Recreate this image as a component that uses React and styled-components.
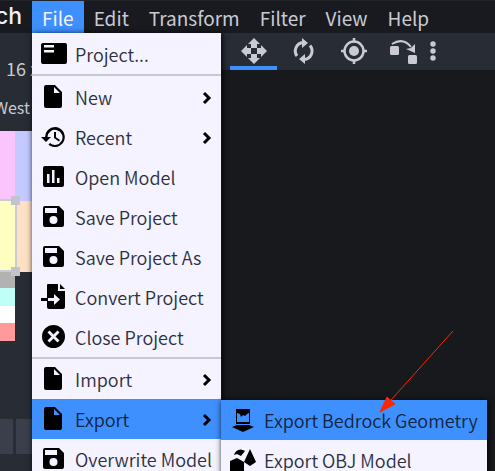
import React from "react";
import styled, { createGlobalStyle } from "styled-components";

const c = {
  dark: "#17191d",
  bar: "#191a1f",
  ui: "#282c34",
  button: "#3a3f4b",
  text: "#cacad4",
  accent: "#3e90ff",
  light: "#f4f3ff",
  ink: "#2d2f3d",
};

const GlobalStyle = createGlobalStyle`
  * { box-sizing: border-box; }
  body {
    margin: 0;
    background: ${c.dark};
    color: ${c.text};
    font: 400 18px/26px "Noto Sans CJK SC", "Noto Sans", sans-serif;
    overflow: hidden;
  }
  button { font: inherit; color: inherit; background: none; border: 0; padding: 0; margin: 0; }
`;

const Shell = styled.div`
  display: flex;
  flex-direction: column;
  height: 100vh;
  overflow: hidden;
`;

const MenuBar = styled.header`
  display: flex;
  flex: none;
  height: 33px;
  background: ${c.bar};
  border-top: 1px solid #22242a;
`;

const Brand = styled.div`
  display: flex;
  justify-content: flex-end;
  flex: none;
  width: 32px;
  padding-right: 10px;
  font: 500 23px/30px Inter, sans-serif;
  color: #f0f0f6;
`;

const MenuSlot = styled.div`
  position: relative;
`;

const MenuButton = styled.button`
  && {
    display: block;
    height: 32px;
    padding: 1px 10px 0;
    font-size: 19px;
    background: ${(p) => (p.$open ? c.accent : "transparent")};
    color: ${(p) => (p.$open ? c.light : c.text)};
  }
`;

const Menu = styled.ul`
  position: absolute;
  z-index: 2;
  top: 100%;
  left: 0;
  width: max-content;
  min-width: 189px;
  margin: 0;
  padding: 1px 0 0;
  list-style: none;
  background: ${c.light};
  color: ${c.ink};
  font-family: "Noto Sans CJK SC DemiLight", "Noto Sans CJK SC", sans-serif;
  font-weight: 350;
  box-shadow: 1px 1px 6px #000;
`;

const SubMenu = styled(Menu)`
  top: 1px;
  left: 100%;
  min-width: 265px;
  padding: 0;
`;

const Entry = styled.li`
  position: relative;
  background: ${(p) => (p.$active ? c.accent : "transparent")};
  color: ${(p) => (p.$active ? "#10233f" : c.ink)};
`;

const EntryButton = styled.button`
  && {
    display: flex;
    align-items: center;
    width: 100%;
    height: 40px;
    padding: 0 9px;
    gap: 8px;
    text-align: left;
    white-space: nowrap;
  }
  svg { flex: none; color: #000; }
`;

const EntryLabel = styled.span`
  flex: 1;
`;

const Divider = styled.li`
  height: 2px;
  background: #c8c8d4;
  &:nth-child(2) { margin-bottom: 1px; }
`;

const Body = styled.div`
  display: flex;
  flex: 1;
  min-height: 0;
`;

const Sidebar = styled.aside`
  flex: none;
  width: 222px;
  background: ${c.ui};
  overflow: hidden;
`;

const SizeLabel = styled.div`
  height: 54px;
  padding: 22px 6px 0;
`;

const FaceTab = styled.div`
  display: flex;
  justify-content: flex-end;
  width: 30px;
  height: 44px;
  padding-top: 7px;
  font-size: 16px;
`;

const UvCanvas = styled.div`
  position: relative;
  display: grid;
  grid-template-columns: 15px 48px;
  grid-template-rows: 70px 71px 16px 18px 17px 18px;
`;

const Face = styled.div`
  background: ${(p) => p.$color};
`;

const Selection = styled.div`
  position: absolute;
  top: 68px;
  left: -60px;
  width: 77px;
  height: 73px;
  border: 2px solid ${c.text};
`;

const Handle = styled.i`
  position: absolute;
  right: -5px;
  top: ${(p) => (p.$bottom ? "auto" : "-5px")};
  bottom: ${(p) => (p.$bottom ? "-6px" : "auto")};
  width: 9px;
  height: 9px;
  background: #c3c3cf;
`;

const Swatches = styled.div`
  display: grid;
  grid-template-columns: 13px 40px;
  gap: 3px;
  margin-top: 78px;
`;

const Slot = styled.div`
  height: 35px;
  background: ${c.button};
`;

const PanelIcon = styled.div`
  padding: 12px 0 0 18px;
`;

const Stage = styled.main`
  flex: 1;
  min-width: 0;
`;

const Toolbar = styled.div`
  display: flex;
  height: 37px;
  padding-left: 8px;
  background: ${c.ui};
`;

const Tool = styled.button`
  && {
    display: flex;
    justify-content: center;
    width: ${(p) => (p.$narrow ? "6px" : "47px")};
    margin-right: ${(p) => (p.$narrow ? "0" : "3px")};
    padding-top: 4px;
    border-bottom: 4px solid ${(p) => (p.$active ? c.accent : "transparent")};
    color: ${c.text};
  }
  svg { flex: none; }
`;

const Pointer = styled.svg`
  position: absolute;
  z-index: 5;
  left: 379px;
  top: 330px;
  pointer-events: none;
`;

const paths = {
  file: "M5 1h9l7 7v14q0 2-2 2H5q-2 0-2-2V3q0-2 2-2zm8 2v6h6z",
  history: "M14 3a10 10 0 0 0-10 10H0l5 5 5-5H6.500a7.500 7.500 0 1 1 2.500 6l-1.500 1.800A10 10 0 1 0 14 3zm-1 5v6l5 3.500 1-1.600-4-2.700V8z",
  chart: "M4 2h17q2 0 2 2v17q0 2-2 2H4q-2 0-2-2V4q0-2 2-2zm2 8v9h2.500v-9zm5-4v13h2.500V6zm5 8v5h2.500v-5z",
  save: "M4 2h14l5 5v14q0 2-2 2H4q-2 0-2-2V4q0-2 2-2zm0 2v5h12V4zm8.500 8a4 4 0 1 0 0 8 4 4 0 0 0 0-8z",
  close: "M12.500 1a11.500 11.500 0 1 0 0 23 11.500 11.500 0 0 0 0-23zM8.500 6.500l4 4 4-4 2 2-4 4 4 4-2 2-4-4-4 4-2-2 4-4-4-4z",
  convert: "M7 0h10v7h7v16q0 2-2 2H8q-2 0-2-2V1q0-1 1-1zM19 0l5 5h-5zM0 14h6v3H0zM7 14h6v-4l6 5.500-6 5.500v-4H7z",
  project: "M2 2h22q2 0 2 2v17q0 2-2 2H2q-2 0-2-2V4q0-2 2-2zm1 2v2.500h10V4zm0 5v2.500h10V9z",
  bedrock: "M6 2h14v15H6zm1 4v9h12V6l-2 1-2 2-2-1-2 2-1-3zM2 20l5-2h12l5 2-11 5z",
  obj: "M0 14l7-3 7 4v11H0zM4 8a7 7 0 0 1 11-4l-4 5-4-2zM20 2l6 13-6 4-6-4z",
};

function Icon({ name }) {
  return (
    <svg width="26" height="26" viewBox="0 0 26 26" aria-hidden="true">
      <path d={paths[name]} fill="currentColor" fillRule="evenodd" />
    </svg>
  );
}

const Chevron = () => (
  <svg width="12" height="16" viewBox="0 0 12 16" aria-hidden="true">
    <path d="M4 4l5 5-5 5" fill="none" stroke="currentColor" strokeWidth="3" />
  </svg>
);

function Item({ icon, label, arrow, active, children }) {
  return (
    <Entry $active={active}>
      <EntryButton type="button">
        <Icon name={icon} />
        <EntryLabel>{label}</EntryLabel>
        {arrow && <Chevron />}
      </EntryButton>
      {children}
    </Entry>
  );
}

const MoveIcon = () => (
  <svg width="28" height="28" viewBox="0 0 28 28" fill="currentColor" aria-hidden="true">
    <path d="M14 1l6 6h-3v5h-6V7H8zM27 14l-6 6v-3h-5v-6h5V8zM14 27l-6-6h3v-5h6v5h3zM1 14l6-6v3h5v6H7v3z" />
    <path d="M11 11h6v6h-6z" fill={c.ui} />
  </svg>
);

const RotateIcon = () => (
  <svg width="28" height="28" viewBox="0 0 28 28" aria-hidden="true">
    <g fill="none" stroke="currentColor" strokeWidth="3">
      <path d="M7 19A8.500 8.500 0 0 1 13 5.500M20 8.500a8.500 8.500 0 0 1-6 14" />
    </g>
    <path d="M12 1v10l6-5zM15 17v10l-6-5z" fill="currentColor" />
  </svg>
);

const PivotIcon = () => (
  <svg width="28" height="28" viewBox="0 0 28 28" fill="none" stroke="currentColor" strokeWidth="2.500" aria-hidden="true">
    <circle cx="14" cy="14" r="9.500" />
    <circle cx="14" cy="14" r="5" fill="currentColor" stroke="none" />
    <path d="M14 1v4M14 23v4M1 14h4M23 14h4" />
  </svg>
);

const VertexIcon = () => (
  <svg width="28" height="28" viewBox="0 0 28 28" fill="currentColor" aria-hidden="true">
    <rect x="0" y="9" width="9" height="9" rx="1.500" />
    <rect x="18" y="18" width="9" height="9" rx="1.500" />
    <path d="M2 7Q13 0 21 10" fill="none" stroke="currentColor" strokeWidth="2" />
    <path d="M25 7l0 9-9-4 5-1z" />
  </svg>
);

const DotsIcon = () => (
  <svg width="6" height="28" viewBox="0 0 6 28" fill="currentColor" aria-hidden="true">
    <circle cx="3" cy="7" r="2.700" />
    <circle cx="3" cy="14" r="2.700" />
    <circle cx="3" cy="21" r="2.700" />
  </svg>
);

const faces = [
  "#f9c5fc", "#c3caff", "#fefec0", "#fee0c4", "#b2b2b2", "transparent",
  "#c0fff7", "transparent", "#ffffff", "transparent", "#ff9a9a", "transparent",
];

export default function App() {
  return (
    <Shell>
      <GlobalStyle />
      <MenuBar>
        <Brand>ch</Brand>
        <MenuSlot>
          <MenuButton type="button" $open>File</MenuButton>
          <Menu>
            <Item icon="project" label="Project..." />
            <Divider />
            <Item icon="file" label="New" arrow />
            <Item icon="history" label="Recent" arrow />
            <Item icon="chart" label="Open Model" />
            <Item icon="save" label="Save Project" />
            <Item icon="save" label="Save Project As" />
            <Item icon="convert" label="Convert Project" />
            <Item icon="close" label="Close Project" />
            <Divider />
            <Item icon="file" label="Import" arrow />
            <Item icon="file" label="Export" arrow active>
              <SubMenu>
                <Item icon="bedrock" label="Export Bedrock Geometry" active />
                <Item icon="obj" label="Export OBJ Model" />
              </SubMenu>
            </Item>
            <Item icon="save" label="Overwrite Model" />
          </Menu>
        </MenuSlot>
        {["Edit", "Transform", "Filter", "View", "Help"].map((m) => (
          <MenuButton type="button" key={m}>{m}</MenuButton>
        ))}
      </MenuBar>
      <Body>
        <Sidebar>
          <SizeLabel>16 x</SizeLabel>
          <FaceTab>West</FaceTab>
          <UvCanvas>
            {faces.map((f, i) => <Face key={i} $color={f} />)}
            <Selection>
              <Handle />
              <Handle $bottom />
            </Selection>
          </UvCanvas>
          <Swatches>
            <Slot />
            <Slot />
          </Swatches>
          <PanelIcon>
            <svg width="12" height="12" viewBox="0 0 12 12" aria-hidden="true">
              <path d="M1 0h8L7 3l1 3-4-2-3 3z" fill={c.text} />
            </svg>
          </PanelIcon>
        </Sidebar>
        <Stage>
          <Toolbar>
            <Tool type="button" aria-label="Move" $active><MoveIcon /></Tool>
            <Tool type="button" aria-label="Rotate"><RotateIcon /></Tool>
            <Tool type="button" aria-label="Pivot"><PivotIcon /></Tool>
            <Tool type="button" aria-label="Vertex snap"><VertexIcon /></Tool>
            <Tool type="button" aria-label="More" $narrow><DotsIcon /></Tool>
          </Toolbar>
        </Stage>
      </Body>
      <Pointer width="76" height="84" viewBox="0 0 76 84" aria-hidden="true">
        <path d="M74 1L12 70" stroke="#ff2600" strokeWidth="1" />
        <path d="M1 82L8 67l8 7z" fill="#ff2600" stroke="#ff2600" />
      </Pointer>
    </Shell>
  );
}
